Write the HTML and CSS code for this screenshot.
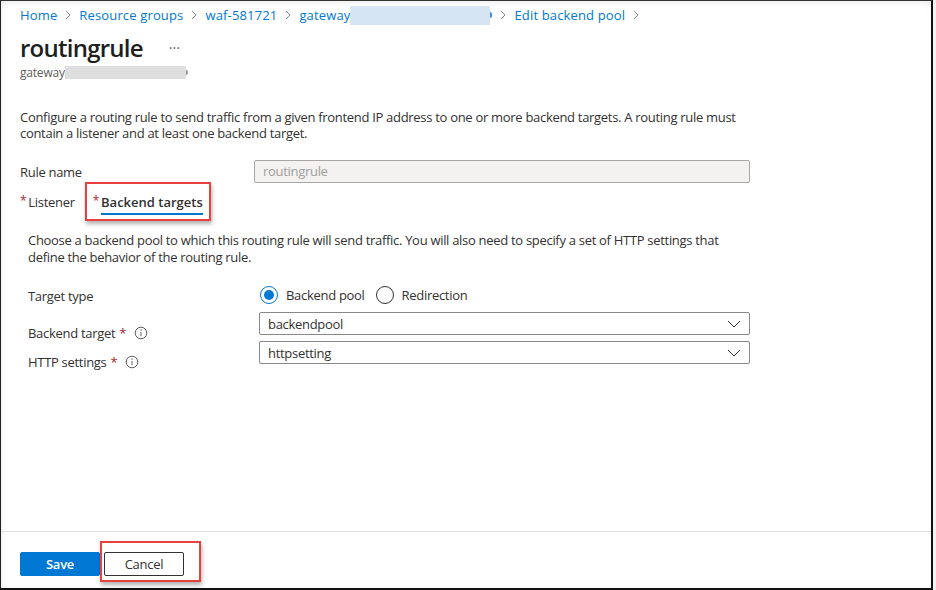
FILE: index.html
```html
<!DOCTYPE html>
<html lang="en">
<head>
<meta charset="utf-8">
<title>routingrule</title>
<link rel="stylesheet" href="styles.css">
</head>
<body>
<div class="frame">
  <main class="page">
    <nav class="crumbs">
      <a class="crumb">Home</a>
      <svg class="chev" viewBox="0 0 6 10"><polyline points="1,1 5,5 1,9"/></svg>
      <a class="crumb">Resource groups</a>
      <svg class="chev" viewBox="0 0 6 10"><polyline points="1,1 5,5 1,9"/></svg>
      <a class="crumb">waf-581721</a>
      <svg class="chev" viewBox="0 0 6 10"><polyline points="1,1 5,5 1,9"/></svg>
      <a class="crumb gw">gateway<span class="redact blue"></span><span class="tail"></span></a>
      <svg class="chev" viewBox="0 0 6 10"><polyline points="1,1 5,5 1,9"/></svg>
      <a class="crumb">Edit backend pool</a>
      <svg class="chev" viewBox="0 0 6 10"><polyline points="1,1 5,5 1,9"/></svg>
    </nav>

    <header class="title-row">
      <h1 class="title">routingrule</h1>
      <span class="more">···</span>
    </header>
    <div class="subtitle">gateway<span class="redact gray"></span><span class="tail-gray"></span></div>

    <p class="desc">Configure a routing rule to send traffic from a given frontend IP address to one or more backend targets. A routing rule must contain a listener and at least one backend target.</p>

    <div class="rule-row">
      <label class="rule-label">Rule name</label>
      <div class="text-input disabled">routingrule</div>
    </div>

    <div class="tabs">
      <div class="tab"><span class="req">*</span><span class="tab-text">Listener</span></div>
      <div class="tab active"><span class="req">*</span><span class="tab-text">Backend targets</span><span class="callout tab-callout"></span></div>
    </div>

    <section class="panel">
      <p class="panel-desc">Choose a backend pool to which this routing rule will send traffic. You will also need to specify a set of HTTP settings that define the behavior of the routing rule.</p>

      <div class="form-row radio-row">
        <div class="flabel">Target type</div>
        <div class="radios">
          <span class="radio on"></span><span class="rlabel">Backend pool</span>
          <span class="radio"></span><span class="rlabel">Redirection</span>
        </div>
      </div>

      <div class="form-row dd-row first">
        <div class="flabel low">Backend target <span class="star">*</span>
          <svg class="info" viewBox="0 0 14 14"><circle cx="7" cy="7" r="5.8"/><line x1="7" y1="6" x2="7" y2="10.2"/><circle class="dot" cx="7" cy="4.1" r="0.75"/></svg>
        </div>
        <div class="dropdown"><span>backendpool</span>
          <svg class="ddchev" viewBox="0 0 14 8"><polyline points="1,1 7,7 13,1"/></svg>
        </div>
      </div>

      <div class="form-row dd-row">
        <div class="flabel low">HTTP settings <span class="star">*</span>
          <svg class="info" viewBox="0 0 14 14"><circle cx="7" cy="7" r="5.8"/><line x1="7" y1="6" x2="7" y2="10.2"/><circle class="dot" cx="7" cy="4.1" r="0.75"/></svg>
        </div>
        <div class="dropdown"><span>httpsetting</span>
          <svg class="ddchev" viewBox="0 0 14 8"><polyline points="1,1 7,7 13,1"/></svg>
        </div>
      </div>
    </section>
  </main>

  <footer class="footer">
    <button class="btn primary">Save</button>
    <button class="btn secondary">Cancel<span class="callout btn-callout"></span></button>
  </footer>
</div>
</body>
</html>
```

FILE: styles.css
```css
* { box-sizing: border-box; }

html, body {
  margin: 0;
  padding: 0;
  background: #f2f2f2;
}

body {
  width: 936px;
  height: 590px;
  overflow: hidden;
  font-family: "Open Sans", "Noto Sans", sans-serif;
  font-size: 13px;
  letter-spacing: -0.3px;
  color: #323130;
}

.frame {
  width: 933px;
  height: 590px;
  background: #fff;
  border-top: 1px solid #333;
  border-left: 1px solid #222;
  border-right: 2px solid #111;
  border-bottom: 2px solid #111;
  box-shadow: inset 1px 2px 6px rgba(0, 0, 0, 0.07);
  display: flex;
  flex-direction: column;
}

.page {
  flex: 1;
  padding: 5px 19px 0 19px;
}

/* breadcrumb */
.crumbs {
  display: flex;
  align-items: center;
  height: 18px;
  line-height: 18px;
  gap: 8px;
  letter-spacing: 0.15px;
}
.crumb {
  color: #0078d4;
  text-decoration: none;
  display: inline-flex;
  align-items: center;
}
.chev {
  width: 6px;
  height: 10px;
  fill: none;
  stroke: #8a8886;
  stroke-width: 1;
}
.redact {
  display: inline-block;
}
.redact.blue {
  width: 140px;
  height: 19px;
  background: #d5e5f3;
}
.tail {
  display: inline-block;
  width: 2px;
  height: 6px;
  background: #3d8fd8;
  border-radius: 0 3px 3px 0;
}

/* title */
.title-row {
  display: flex;
  align-items: center;
  margin-top: 8px;
  height: 32px;
}
.title {
  margin: 0;
  font-size: 24px;
  font-weight: 600;
  letter-spacing: -0.75px;
  line-height: 32px;
  color: #201f1e;
}
.more {
  margin-left: 26px;
  color: #605e5c;
  font-size: 14px;
  letter-spacing: 0;
  line-height: 32px;
}
.subtitle {
  display: flex;
  align-items: center;
  height: 16px;
  font-size: 12px;
  color: #605e5c;
  letter-spacing: -0.2px;
}
.redact.gray {
  width: 121px;
  height: 13px;
  background: #dedede;
}
.tail-gray {
  display: inline-block;
  width: 2px;
  height: 5px;
  background: #9a9a9a;
  border-radius: 0 3px 3px 0;
}

/* description */
.desc {
  margin: 29px 0 0 0;
  width: 730px;
  line-height: 16px;
}

.rule-row {
  display: grid;
  grid-template-columns: 234px 496px;
  align-items: center;
  margin-top: 19px;
}
.rule-label {
  line-height: 18px;
  padding-top: 1px;
}
.text-input {
  height: 23px;
  border: 1px solid #a19f9d;
  border-radius: 2px;
  padding: 0 8px;
  line-height: 21px;
}
.text-input.disabled {
  background: #f3f2f1;
  color: #a19f9d;
  border-color: #a8a6a4;
}

/* tabs */
.tabs {
  display: flex;
  margin-top: 10px;
  gap: 18px;
}
.tab {
  position: relative;
  display: flex;
  align-items: flex-start;
  line-height: 18px;
}
.req {
  color: #a4262c;
  font-size: 12px;
  line-height: 15px;
  margin-right: 2px;
}
.tab-text {
  padding-bottom: 2px;
  border-bottom: 2px solid transparent;
}
.tab.active .tab-text {
  font-weight: 600;
  letter-spacing: 0;
  border-bottom-color: #0078d4;
}

.callout {
  position: absolute;
  border: 2px solid #e8403f;
  box-shadow: 1px 3px 4px rgba(0, 0, 0, 0.3);
  pointer-events: none;
}
.tab-callout {
  left: -8px;
  right: -8px;
  top: -11px;
  bottom: -6px;
}

/* panel */
.panel {
  padding-left: 8px;
}
.panel-desc {
  margin: 17px 0 0 0;
  width: 710px;
  line-height: 17px;
}
.form-row {
  display: grid;
  grid-template-columns: 231px 491px;
}
.radio-row {
  margin-top: 18px;
  align-items: center;
}
.radio-row .flabel {
  padding-top: 3px;
}
.flabel {
  line-height: 18px;
  display: flex;
  align-items: center;
}
.radios {
  display: flex;
  align-items: center;
  height: 20px;
  padding-left: 1px;
}
.radio {
  width: 18px;
  height: 18px;
  border-radius: 50%;
  border: 1px solid #323130;
  display: inline-flex;
  align-items: center;
  justify-content: center;
  margin-right: 8px;
}
.radio.on {
  border-color: #0078d4;
}
.radio.on::after {
  content: "";
  width: 10px;
  height: 10px;
  border-radius: 50%;
  background: #0078d4;
}
.rlabel {
  margin-right: 11px;
}

.dd-row {
  align-items: end;
}
.dd-row.first {
  margin-top: 7px;
}
.dd-row + .dd-row {
  margin-top: 6px;
}
.flabel.low {
  margin-bottom: -7px;
}
.star {
  color: #a4262c;
  margin-left: 4px;
}
.info {
  width: 14px;
  height: 14px;
  margin-left: 8px;
  fill: none;
  stroke: #605e5c;
  stroke-width: 1;
}
.info .dot {
  fill: #605e5c;
  stroke: none;
}
.dropdown {
  height: 23px;
  border: 1px solid #8a8886;
  border-radius: 2px;
  padding: 0 8px;
  display: flex;
  align-items: center;
  justify-content: space-between;
  color: #323130;
}
.ddchev {
  width: 14px;
  height: 8px;
  fill: none;
  stroke: #323130;
  stroke-width: 1;
}

/* footer */
.footer {
  height: 57px;
  border-top: 1px solid #e1dfdd;
  display: flex;
  align-items: flex-start;
  gap: 4px;
  padding: 20px 0 0 19px;
}
.btn {
  position: relative;
  width: 80px;
  height: 24px;
  border-radius: 2px;
  font-family: "Open Sans", "Noto Sans", sans-serif;
  font-size: 13px;
  letter-spacing: -0.25px;
  font-weight: 600;
  padding: 0;
  cursor: pointer;
}
.btn.primary {
  background: #0078d4;
  border: 1px solid #0078d4;
  color: #fff;
}
.btn.secondary {
  background: #fff;
  border: 1px solid #323130;
  color: #323130;
  font-weight: 400;
}
.btn-callout {
  left: -5px;
  right: -18px;
  top: -12px;
  bottom: -7px;
}
```
